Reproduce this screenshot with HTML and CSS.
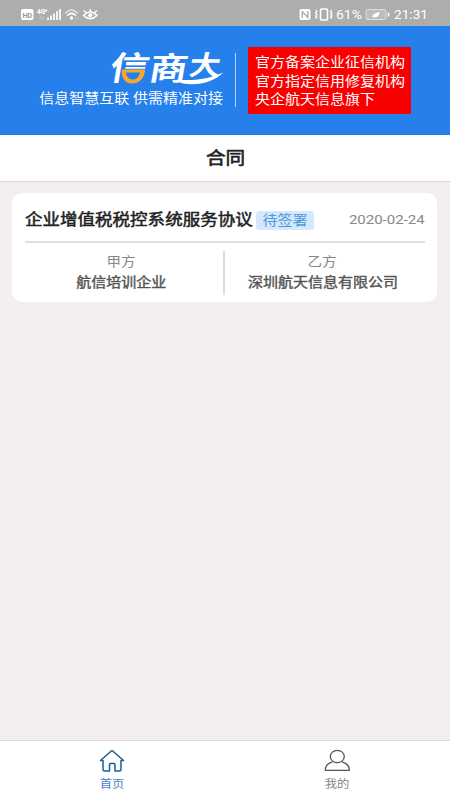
FILE: index.html
```html
<!DOCTYPE html>
<html lang="zh-CN">
<head>
<meta charset="utf-8">
<title>合同</title>
<link rel="stylesheet" href="styles.css">
</head>
<body>
<div class="app">
  <div class="status">
    <svg class="status-left" width="86" height="26" viewBox="0 0 86 26">
      <rect x="1" y="9" width="12.500" height="11" rx="2" fill="#fff"/>
      <text x="2.400" y="17.500" font-size="8" font-weight="700" textLength="10" lengthAdjust="spacingAndGlyphs" fill="#999">HD</text>
      <text x="17" y="13.500" font-size="6.500" font-weight="700" textLength="8" lengthAdjust="spacingAndGlyphs" fill="#fff">4G</text>
      <path d="M26 9v3M24.500 10.500h3" stroke="#fff" stroke-width=".8"/>
      <path d="M20.500 16v3.500M19 18l1.500 1.500M23 19.500V16l1.500 1.500" stroke="#c9c9c9" stroke-width=".8" fill="none"/>
      <path d="M28 17.500V20M31 15.500V20M34 13.500V20M37 11V20M40 9V20" stroke="#fff" stroke-width="1.700"/>
      <g fill="none" stroke="#fff" stroke-width="1.500" stroke-linecap="round">
        <path d="M45.500 13Q51.500 7 57.500 13" stroke="#e4e4e4"/><path d="M47.500 15.300Q51.500 11.500 55.500 15.300"/>
      </g>
      <circle cx="51.500" cy="18" r="1.700" fill="#fff"/>
      <path d="M55.500 16.500V20M58 16.500V20" stroke="#c9c9c9" stroke-width=".8"/>
      <g fill="none" stroke="#fff" stroke-width="1.500" stroke-linecap="round">
        <path d="M63.500 15.500Q70.500 8.500 77 15.500Q70.500 22 63.500 15.500ZM64 11l2 1.500M70.300 9.500v2M76.500 11l-2 1.500"/>
      </g>
      <circle cx="70.300" cy="15.300" r="2.100" fill="#fff"/>
    </svg>
    <svg class="status-right" width="132" height="26" viewBox="0 0 132 26">
      <rect x="1.500" y="9" width="11" height="11" rx="2" fill="#fff"/>
      <path d="M4.300 18V11.500L9.800 17.500V11" fill="none" stroke="#adadad" stroke-width="1.400"/>
      <rect x="22.500" y="9" width="7" height="11" rx="1" fill="none" stroke="#fff" stroke-width="1.600"/>
      <path d="M17.500 10l1.500 1.500-1.500 1.500 1.500 1.500-1.500 1.500 1.500 1.500-1.500 1M34 10l-1.500 1.500 1.500 1.500-1.500 1.500 1.500 1.500-1.500 1.500 1.500 1" fill="none" stroke="#fff" stroke-width="1.200"/>
      <text x="38" y="19" font-size="12.400" textLength="26" lengthAdjust="spacingAndGlyphs" fill="#fff">61%</text>
      <rect x="68" y="9.500" width="20" height="10" rx="2" fill="#bdbdbd" stroke="#dedede"/>
      <path d="M90.500 12.500v4" stroke="#fff" stroke-width="1.500"/>
      <path d="M74.500 17.500c-.5-4 3.500-4.500 7-5.500c0 4-2.500 6-5.500 5Z" fill="#fff"/>
      <text x="96" y="19" font-size="12.800" textLength="34" lengthAdjust="spacingAndGlyphs" fill="#fff">21:31</text>
    </svg>
  </div>

  <header class="banner">
    <div class="brand">
      <svg class="logo" width="128" height="46" viewBox="0 0 128 46">
        <g transform="translate(6 0) skewX(-10)" fill="#fff" font-weight="700">
          <text x="13.500" y="35.500" font-size="33" textLength="39" lengthAdjust="spacingAndGlyphs">信</text>
          <text x="53" y="35.500" font-size="32" textLength="38" lengthAdjust="spacingAndGlyphs">商</text>
          <text x="92" y="30" font-size="27" textLength="31" lengthAdjust="spacingAndGlyphs">大</text>
        </g>
        <path d="M26.500 23.700H52L48 40H24.500Z" fill="#2580eb"/>
        <path d="M27 24.500H50C50 32.500 44.500 38.500 37 38.500C30 38.500 26 33 27 24.500Z" fill="#f9a62c"/>
        <path d="M31 27.500H45C44 32 41.500 34.500 37.500 34.500C34 34.500 31.500 32 31 27.500Z" fill="#2580eb"/>
        <path d="M83 34.500C100 36.500 117 33 128 27.500C121 36 103 41.500 88 38.500Q84 37.500 83 34.500Z" fill="#fff"/>
      </svg>
      <div class="slogan"><span class="wide from-right">信息智慧互联 供需精准对接</span></div>
    </div>
    <div class="bar"></div>
    <div class="notice">
      <div><span class="wide">官方备案企业征信机构</span></div>
      <div><span class="wide">官方指定信用修复机构</span></div>
      <div><span class="wide">央企航天信息旗下</span></div>
    </div>
  </header>

  <h1 class="title"><span class="wide centered">合同</span></h1>

  <main class="content">
    <article class="card">
      <div class="card-head">
        <div class="name"><span class="wide">企业增值税税控系统服务协议</span></div>
        <div class="tag"><span class="wide centered">待签署</span></div>
        <div class="date"><span class="wide from-right">2020-02-24</span></div>
      </div>
      <div class="parties">
        <div class="party first">
          <span class="role wide centered">甲方</span>
          <span class="company wide centered">航信培训企业</span>
        </div>
        <div class="party">
          <span class="role wide centered">乙方</span>
          <span class="company wide centered">深圳航天信息有限公司</span>
        </div>
      </div>
    </article>
  </main>

  <nav class="tabs">
    <div class="tab active">
      <svg width="28" height="24" viewBox="0 0 28 24" fill="none" stroke="#15609f" stroke-width="1.500" stroke-linejoin="round" stroke-linecap="round">
        <path d="M5 11.500H2.500L13 2.200Q14 1.400 15 2.200L25.500 11.500H23V20.500Q23 22 21.500 22H17V15.500Q17 14.500 16 14.500H12.500Q11.500 14.500 11.500 15.500V22H6.500Q5 22 5 20.500Z"/>
      </svg>
      <span class="wide centered">首页</span>
    </div>
    <div class="tab">
      <svg width="28" height="24" viewBox="0 0 28 24" fill="none" stroke="#555" stroke-width="1.300" stroke-linejoin="round">
        <ellipse cx="14.300" cy="7.500" rx="7" ry="6.200"/>
        <path d="M9.500 12.800C5 14 2.300 17 2.300 21.300H26.300C26.300 17 23.500 14 19 12.800"/>
      </svg>
      <span class="wide centered">我的</span>
    </div>
  </nav>
</div>
</body>
</html>
```
FILE: styles.css
```css
* { box-sizing: border-box; }

body {
  margin: 0;
  font-family: Roboto, "Noto Sans CJK SC", sans-serif;
}

.app {
  width: 450px;
  height: 800px;
  display: flex;
  flex-direction: column;
  background: #f3eff0;
  overflow: hidden;
}

/* Lettering is slightly wider than it is tall throughout the app. */
.wide {
  display: inline-block;
  white-space: nowrap;
  transform: scaleX(1.12);
  transform-origin: left center;
}
.centered { transform-origin: center; }
.from-right { transform-origin: right center; }

.status {
  height: 26px;
  flex: none;
  display: flex;
  justify-content: space-between;
  padding: 0 20px;
  background: #adadad;
}

.banner {
  height: 109px;
  flex: none;
  display: flex;
  align-items: flex-start;
  padding: 21px 39px 0 23px;
  background: #2580eb;
}
.brand {
  width: 200px;
  display: flex;
  flex-direction: column;
  align-items: flex-end;
}
.logo {
  display: block;
  overflow: visible;
  margin-top: -2px;
}
.slogan {
  margin-top: -2px;
  height: 20px;
  line-height: 20px;
  font-size: 13.4px;
  color: #fff;
}
.bar {
  width: 1px;
  height: 54px;
  margin: 6px 12px 0;
  background: #b5d4f8;
}
.notice {
  width: 163px;
  height: 67px;
  padding: 7px 7px 0;
  background: #f80000;
  color: #fff;
  font-size: 13.4px;
  line-height: 18.7px;
}

.title {
  height: 47px;
  flex: none;
  margin: 0;
  border-bottom: 1px solid #dcdadb;
  background: #fff;
  text-align: center;
  font-size: 17.5px;
  line-height: 46px;
  font-weight: 400;
  -webkit-text-stroke: .6px #222;
  color: #222;
}

.content {
  flex: 1;
  padding: 11px 13px 0 12px;
}
.card {
  height: 109px;
  padding: 0 12px 0 13px;
  border-radius: 10px;
  background: #fff;
}
.card-head {
  height: 50px;
  display: flex;
  align-items: center;
  border-bottom: 2px solid #dfdfdf;
  padding-top: 4px;
}
.name {
  width: 231px;
  margin-top: -2px;
  font-size: 15.65px;
  -webkit-text-stroke: .5px #222;
  color: #222;
}
.tag {
  width: 58px;
  height: 19px;
  margin-top: 2px;
  border-radius: 3px;
  background: #d6e9fc;
  color: #4a9ade;
  font-size: 13.4px;
  line-height: 19px;
  text-align: center;
}
.date {
  margin-left: auto;
  font-size: 13.4px;
  color: #888;
}
.parties {
  display: flex;
  padding-top: 8px;
}
.party {
  width: 200px;
  height: 44px;
  display: flex;
  flex-direction: column;
  align-items: center;
  padding-right: 5px;
}
.party.first {
  padding-right: 6px;
  border-right: 2px solid #dcdcdc;
}
.role {
  font-size: 13px;
  line-height: 21px;
  color: #888;
}
.company {
  font-size: 13.4px;
  line-height: 21px;
  -webkit-text-stroke: .4px #555;
  color: #555;
}

.tabs {
  height: 60px;
  flex: none;
  display: flex;
  border-top: 1px solid #dadada;
  background: #fff;
}
.tab {
  flex: 1;
  display: flex;
  flex-direction: column;
  align-items: center;
  padding: 8px 1px 0 0;
  font-size: 11px;
  line-height: 24px;
  color: #888;
}
.tab svg { display: block; }
.tab.active { color: #4b7fc9; }
```
